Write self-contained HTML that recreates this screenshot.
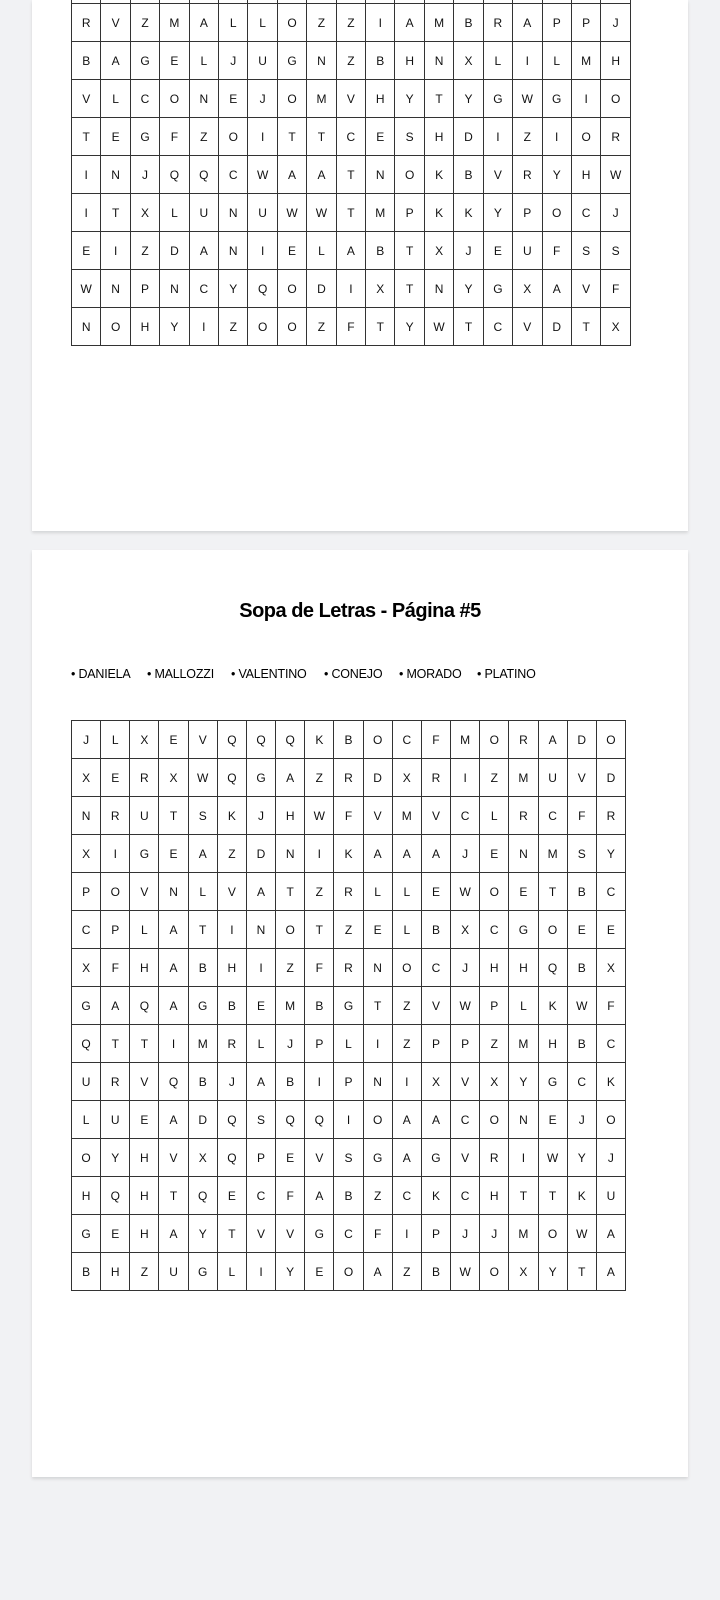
<!DOCTYPE html>
<html><head><meta charset="utf-8"><style>
html,body{margin:0;padding:0;width:720px;height:1600px;background:#f1f2f4;overflow:hidden;font-family:"Liberation Sans",Arial,sans-serif;}
.card{position:absolute;left:32px;width:656px;background:#fff;box-shadow:0 2px 3px rgba(0,0,0,0.12);overflow:hidden;}
table{position:absolute;border-collapse:collapse;table-layout:fixed;}
td{border:1px solid #333;text-align:center;font-size:12px;color:#111;padding:0;height:37px;}
.title{position:absolute;left:0;width:656px;top:50px;text-align:center;font-weight:bold;font-size:20px;color:#000;letter-spacing:-0.5px;}
.words{position:absolute;top:117px;left:0;font-size:12.5px;color:#000;white-space:nowrap;letter-spacing:-0.2px;}
.words span{position:absolute;}
</style></head><body>
<div class="card" style="top:0;height:531px;">
<table style="left:39px;top:-35px;width:560px;">
<tr><td></td><td></td><td></td><td></td><td></td><td></td><td></td><td></td><td></td><td></td><td></td><td></td><td></td><td></td><td></td><td></td><td></td><td></td><td></td></tr>
<tr><td>R</td><td>V</td><td>Z</td><td>M</td><td>A</td><td>L</td><td>L</td><td>O</td><td>Z</td><td>Z</td><td>I</td><td>A</td><td>M</td><td>B</td><td>R</td><td>A</td><td>P</td><td>P</td><td>J</td></tr>
<tr><td>B</td><td>A</td><td>G</td><td>E</td><td>L</td><td>J</td><td>U</td><td>G</td><td>N</td><td>Z</td><td>B</td><td>H</td><td>N</td><td>X</td><td>L</td><td>I</td><td>L</td><td>M</td><td>H</td></tr>
<tr><td>V</td><td>L</td><td>C</td><td>O</td><td>N</td><td>E</td><td>J</td><td>O</td><td>M</td><td>V</td><td>H</td><td>Y</td><td>T</td><td>Y</td><td>G</td><td>W</td><td>G</td><td>I</td><td>O</td></tr>
<tr><td>T</td><td>E</td><td>G</td><td>F</td><td>Z</td><td>O</td><td>I</td><td>T</td><td>T</td><td>C</td><td>E</td><td>S</td><td>H</td><td>D</td><td>I</td><td>Z</td><td>I</td><td>O</td><td>R</td></tr>
<tr><td>I</td><td>N</td><td>J</td><td>Q</td><td>Q</td><td>C</td><td>W</td><td>A</td><td>A</td><td>T</td><td>N</td><td>O</td><td>K</td><td>B</td><td>V</td><td>R</td><td>Y</td><td>H</td><td>W</td></tr>
<tr><td>I</td><td>T</td><td>X</td><td>L</td><td>U</td><td>N</td><td>U</td><td>W</td><td>W</td><td>T</td><td>M</td><td>P</td><td>K</td><td>K</td><td>Y</td><td>P</td><td>O</td><td>C</td><td>J</td></tr>
<tr><td>E</td><td>I</td><td>Z</td><td>D</td><td>A</td><td>N</td><td>I</td><td>E</td><td>L</td><td>A</td><td>B</td><td>T</td><td>X</td><td>J</td><td>E</td><td>U</td><td>F</td><td>S</td><td>S</td></tr>
<tr><td>W</td><td>N</td><td>P</td><td>N</td><td>C</td><td>Y</td><td>Q</td><td>O</td><td>D</td><td>I</td><td>X</td><td>T</td><td>N</td><td>Y</td><td>G</td><td>X</td><td>A</td><td>V</td><td>F</td></tr>
<tr><td>N</td><td>O</td><td>H</td><td>Y</td><td>I</td><td>Z</td><td>O</td><td>O</td><td>Z</td><td>F</td><td>T</td><td>Y</td><td>W</td><td>T</td><td>C</td><td>V</td><td>D</td><td>T</td><td>X</td></tr>
</table>
</div>
<div class="card" style="top:550px;height:927px;">
<div class="title">Sopa de Letras - Página #5</div>
<div class="words"><span style="left:39px">• DANIELA</span><span style="left:115px">• MALLOZZI</span><span style="left:199px">• VALENTINO</span><span style="left:292px">• CONEJO</span><span style="left:367px">• MORADO</span><span style="left:445px">• PLATINO</span></div>
<table style="left:39px;top:170px;width:555px;">
<tr><td>J</td><td>L</td><td>X</td><td>E</td><td>V</td><td>Q</td><td>Q</td><td>Q</td><td>K</td><td>B</td><td>O</td><td>C</td><td>F</td><td>M</td><td>O</td><td>R</td><td>A</td><td>D</td><td>O</td></tr>
<tr><td>X</td><td>E</td><td>R</td><td>X</td><td>W</td><td>Q</td><td>G</td><td>A</td><td>Z</td><td>R</td><td>D</td><td>X</td><td>R</td><td>I</td><td>Z</td><td>M</td><td>U</td><td>V</td><td>D</td></tr>
<tr><td>N</td><td>R</td><td>U</td><td>T</td><td>S</td><td>K</td><td>J</td><td>H</td><td>W</td><td>F</td><td>V</td><td>M</td><td>V</td><td>C</td><td>L</td><td>R</td><td>C</td><td>F</td><td>R</td></tr>
<tr><td>X</td><td>I</td><td>G</td><td>E</td><td>A</td><td>Z</td><td>D</td><td>N</td><td>I</td><td>K</td><td>A</td><td>A</td><td>A</td><td>J</td><td>E</td><td>N</td><td>M</td><td>S</td><td>Y</td></tr>
<tr><td>P</td><td>O</td><td>V</td><td>N</td><td>L</td><td>V</td><td>A</td><td>T</td><td>Z</td><td>R</td><td>L</td><td>L</td><td>E</td><td>W</td><td>O</td><td>E</td><td>T</td><td>B</td><td>C</td></tr>
<tr><td>C</td><td>P</td><td>L</td><td>A</td><td>T</td><td>I</td><td>N</td><td>O</td><td>T</td><td>Z</td><td>E</td><td>L</td><td>B</td><td>X</td><td>C</td><td>G</td><td>O</td><td>E</td><td>E</td></tr>
<tr><td>X</td><td>F</td><td>H</td><td>A</td><td>B</td><td>H</td><td>I</td><td>Z</td><td>F</td><td>R</td><td>N</td><td>O</td><td>C</td><td>J</td><td>H</td><td>H</td><td>Q</td><td>B</td><td>X</td></tr>
<tr><td>G</td><td>A</td><td>Q</td><td>A</td><td>G</td><td>B</td><td>E</td><td>M</td><td>B</td><td>G</td><td>T</td><td>Z</td><td>V</td><td>W</td><td>P</td><td>L</td><td>K</td><td>W</td><td>F</td></tr>
<tr><td>Q</td><td>T</td><td>T</td><td>I</td><td>M</td><td>R</td><td>L</td><td>J</td><td>P</td><td>L</td><td>I</td><td>Z</td><td>P</td><td>P</td><td>Z</td><td>M</td><td>H</td><td>B</td><td>C</td></tr>
<tr><td>U</td><td>R</td><td>V</td><td>Q</td><td>B</td><td>J</td><td>A</td><td>B</td><td>I</td><td>P</td><td>N</td><td>I</td><td>X</td><td>V</td><td>X</td><td>Y</td><td>G</td><td>C</td><td>K</td></tr>
<tr><td>L</td><td>U</td><td>E</td><td>A</td><td>D</td><td>Q</td><td>S</td><td>Q</td><td>Q</td><td>I</td><td>O</td><td>A</td><td>A</td><td>C</td><td>O</td><td>N</td><td>E</td><td>J</td><td>O</td></tr>
<tr><td>O</td><td>Y</td><td>H</td><td>V</td><td>X</td><td>Q</td><td>P</td><td>E</td><td>V</td><td>S</td><td>G</td><td>A</td><td>G</td><td>V</td><td>R</td><td>I</td><td>W</td><td>Y</td><td>J</td></tr>
<tr><td>H</td><td>Q</td><td>H</td><td>T</td><td>Q</td><td>E</td><td>C</td><td>F</td><td>A</td><td>B</td><td>Z</td><td>C</td><td>K</td><td>C</td><td>H</td><td>T</td><td>T</td><td>K</td><td>U</td></tr>
<tr><td>G</td><td>E</td><td>H</td><td>A</td><td>Y</td><td>T</td><td>V</td><td>V</td><td>G</td><td>C</td><td>F</td><td>I</td><td>P</td><td>J</td><td>J</td><td>M</td><td>O</td><td>W</td><td>A</td></tr>
<tr><td>B</td><td>H</td><td>Z</td><td>U</td><td>G</td><td>L</td><td>I</td><td>Y</td><td>E</td><td>O</td><td>A</td><td>Z</td><td>B</td><td>W</td><td>O</td><td>X</td><td>Y</td><td>T</td><td>A</td></tr>
</table>
</div>
</body></html>
